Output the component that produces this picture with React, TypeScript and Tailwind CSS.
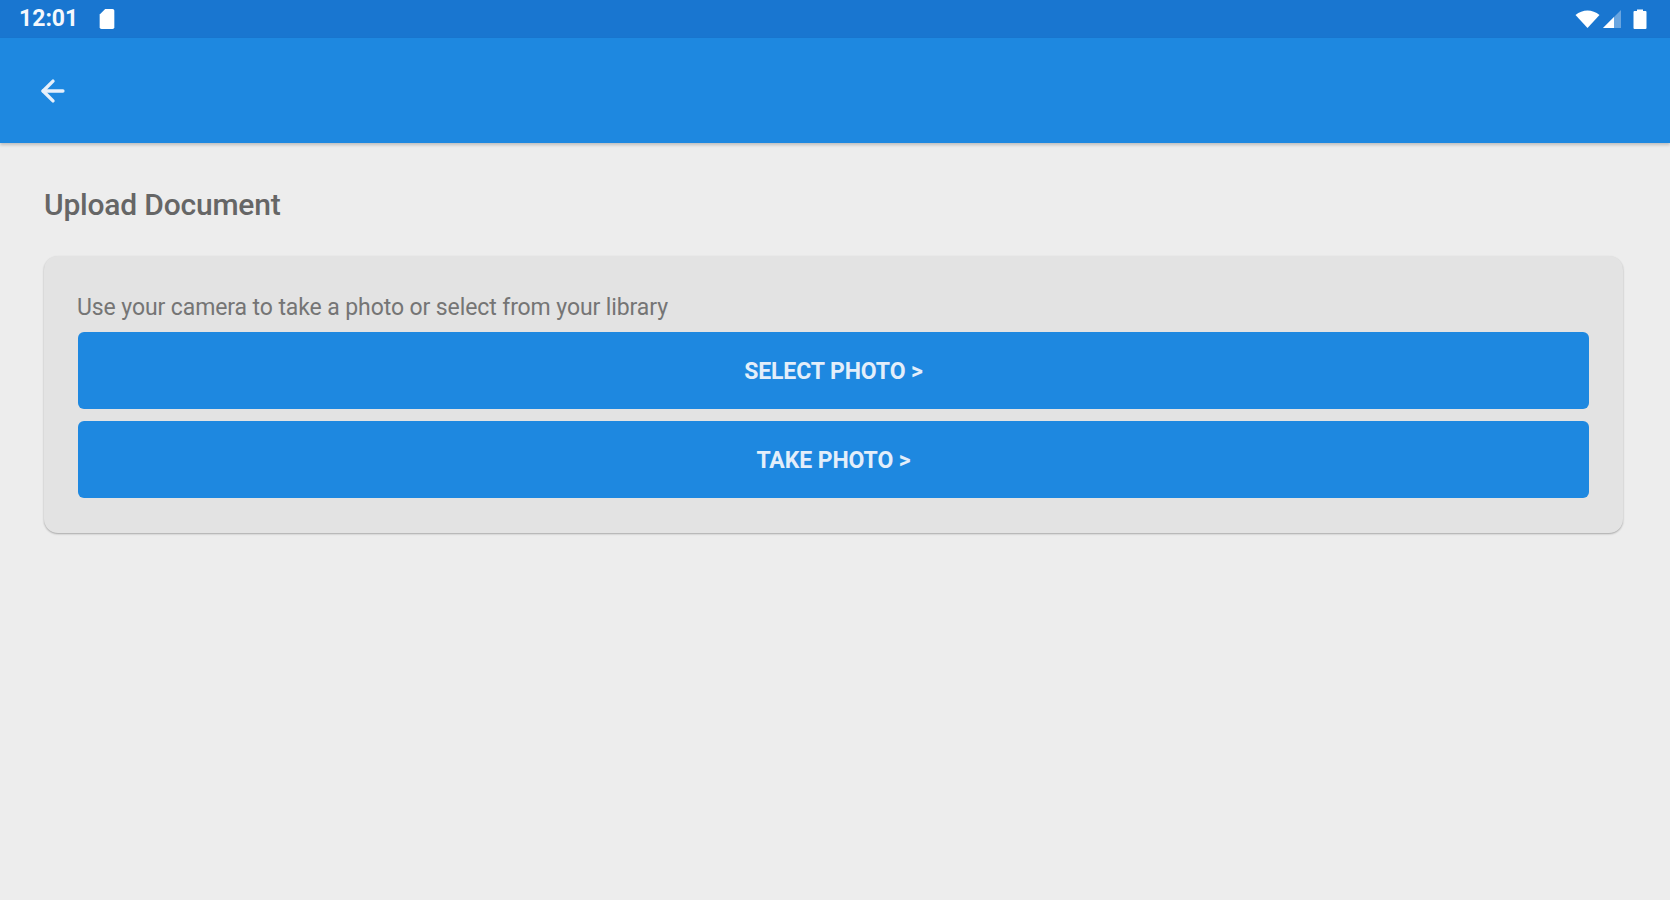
import { ArrowLeft } from 'lucide-react'

function StatusIcons() {
  return (
    <div className="flex items-center gap-[1px]">
      <svg width="27" height="20" viewBox="0 0 26 20" className="text-white">
        <path d="M1 6 C8 0 18 0 25 6 L13 19 Z" fill="currentColor" />
      </svg>
      <svg width="20" height="20" viewBox="0 0 20 20">
        <path d="M1 19 L19 1 V19 Z" fill="#fff" fillOpacity="0.35" />
        <path d="M1 19 L12 8 V19 Z" fill="#fff" />
      </svg>
      <svg width="14" height="22" viewBox="0 0 14 22" className="ml-[10px]">
        <path d="M4 3 V1.5 H10 V3 H12.5 Q13.5 3 13.5 4 V20 Q13.5 21 12.5 21 H1.5 Q0.5 21 0.5 20 V4 Q0.5 3 1.5 3 Z" fill="#fff" />
      </svg>
    </div>
  )
}

function SdCard() {
  return (
    <svg width="18" height="22" viewBox="0 0 18 24">
      <path d="M7 1 H15 Q17 1 17 3 V21 Q17 23 15 23 H3 Q1 23 1 21 V7 Z" fill="#fff" />
    </svg>
  )
}

function PhotoButton({ label }: { label: string }) {
  return (
    <button
      type="button"
      className="h-[77px] w-full rounded-[6px] bg-[#1e88e0] pt-[3px] text-[23px] font-bold tracking-[-0.1px] text-[#e3eefa]"
    >
      {label}
    </button>
  )
}

export default function App() {
  return (
    <div className="flex h-[900px] flex-col overflow-hidden bg-[#ededed] font-['Roboto',sans-serif]">
      {/* Status bar */}
      <div className="flex h-[38px] items-center justify-between bg-[#1976d0] pl-[19px] pr-[23px]">
        <div className="flex items-center gap-[20px]">
          <span className="pb-[2px] text-[23px] font-bold leading-none text-[#f4f8fd]">12:01</span>
          <SdCard />
        </div>
        <StatusIcons />
      </div>

      {/* App bar */}
      <div className="flex h-[105px] items-center bg-[#1e88e0] pl-[36px] shadow-[0_2px_3px_rgba(0,0,0,0.2)]">
        <ArrowLeft size={34} strokeWidth={2.4} className="text-[#e6f0fb]" />
      </div>

      <div className="pl-[44px] pr-[47px] pt-[42px]">
        <h1 className="text-[30px] font-medium leading-[40px] tracking-[-0.2px] text-[#666666]">Upload Document</h1>

        {/* Upload card */}
        <div className="mt-[31px] rounded-[14px] bg-[#e3e3e3] px-[34px] pb-[35px] pt-[35px] shadow-[0_1px_2px_rgba(0,0,0,0.3)]">
          <p className="-ml-[1px] text-[23px] leading-[34px] tracking-[-0.1px] text-[#757575]">
            Use your camera to take a photo or select from your library
          </p>
          <div className="mt-[7px] flex flex-col gap-[12px]">
            <PhotoButton label="SELECT PHOTO >" />
            <PhotoButton label="TAKE PHOTO >" />
          </div>
        </div>
      </div>
    </div>
  )
}
